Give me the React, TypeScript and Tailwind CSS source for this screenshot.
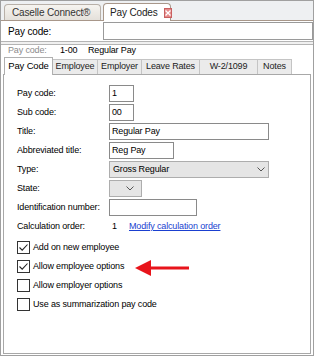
import React from "react";

const font = { fontFamily: "'Liberation Sans', Arial, sans-serif" };

function Check({ checked }: { checked?: boolean }) {
  return (
    <div className="w-[13px] h-[13px] border border-[#333] bg-white flex items-center justify-center shrink-0">
      {checked && (
        <svg width="11" height="11" viewBox="0 0 11 11">
          <path d="M1.5 5.5 L4.2 8.2 L9.5 2.5" fill="none" stroke="#222" strokeWidth="1.1" />
        </svg>
      )}
    </div>
  );
}

function Row({ label, children }: { label: string; children?: React.ReactNode }) {
  return (
    <div className="flex items-center h-[17px]">
      <div className="w-[92px] shrink-0">{label}</div>
      {children}
    </div>
  );
}

const inputCls = "h-[17px] border border-[#8a8a8a] bg-white flex items-center px-[2px]";

const Chevron = () => (
  <svg width="8" height="5" viewBox="0 0 8 5">
    <path d="M0.5 0.5 L4 4 L7.5 0.5" fill="none" stroke="#555" strokeWidth="1" />
  </svg>
);

export default function App() {
  return (
    <div
      className="w-[314px] h-[356px] bg-white border border-[#a0a0a0] flex flex-col text-[9px] tracking-[-0.15px] text-black overflow-hidden relative whitespace-nowrap"
      style={font}
    >
      {/* top tab strip */}
      <div className="h-[20px] bg-[#eef0f2] border-b border-[#a8978a] flex items-end pl-[3px] gap-[2px] shrink-0">
        <div className="h-[16px] w-[97px] border border-b-0 border-[#b8b0a8] rounded-t-[4px] bg-gradient-to-b from-[#f6f4f0] to-[#e4e0da] flex items-center pl-[7px] text-[#333] text-[10px]">
          Caselle Connect®
        </div>
        <div className="h-[18px] w-[68px] border border-b-0 border-[#a8978a] rounded-t-[4px] bg-white flex items-center pl-[6px] gap-[6px] mb-[-1px] text-[#222] text-[10px]">
          <span>Pay Codes</span>
          <div className="w-[10px] h-[10px] bg-[#e58a8a] border border-[#c86060] flex items-center justify-center">
            <svg width="6" height="6" viewBox="0 0 6 6">
              <path d="M0.5 0.5 L5.5 5.5 M5.5 0.5 L0.5 5.5" stroke="white" strokeWidth="1.3" />
            </svg>
          </div>
        </div>
      </div>

      {/* Pay code lookup row */}
      <div className="h-[20px] flex items-center pl-[7px] shrink-0">
        <div className="w-[95px] text-[10px]">Pay code:</div>
        <div className="flex-1 h-[18px] border border-[#9a9a9a] bg-white" />
      </div>
      <div className="h-[4px] border-t border-b border-[#b4b4b4] bg-[#f0f0f0] shrink-0" />

      {/* subheader */}
      <div className="h-[12px] flex items-center pl-[7px] shrink-0">
        <span className="text-[#8c8c8c] w-[52px]">Pay code:</span>
        <span className="w-[28px]">1-00</span>
        <span>Regular Pay</span>
      </div>

      {/* inner tabs */}
      <div className="h-[17px] flex items-end pl-[3px] shrink-0 relative z-10">
        <div className="h-[18px] w-[49px] border border-b-0 border-[#b0b0b0] bg-white flex items-center justify-center mb-[-1px] text-[9.5px]">
          Pay Code
        </div>
        {[
          ["Employee", "w-[45px]"],
          ["Employer", "w-[44px]"],
          ["Leave Rates", "w-[58px]"],
          ["W-2/1099", "w-[58px]"],
          ["Notes", "w-[34px]"],
        ].map(([t, w]) => (
          <div
            key={t}
            className={`h-[15px] ${w} border border-l-0 border-b-0 border-[#c4c4c4] bg-[#ebebeb] flex items-center justify-center text-[#222]`}
          >
            {t}
          </div>
        ))}
      </div>

      {/* panel */}
      <div className="flex-1 mx-[2px] mb-[1px] border border-[#a8a8a8] bg-white pl-[13px] pt-[10px] flex flex-col gap-[2px]">
        <Row label="Pay code:">
          <div className={`${inputCls} w-[25px]`}>1</div>
        </Row>
        <Row label="Sub code:">
          <div className={`${inputCls} w-[25px]`}>00</div>
        </Row>
        <Row label="Title:">
          <div className={`${inputCls} w-[160px]`}>Regular Pay</div>
        </Row>
        <Row label="Abbreviated title:">
          <div className={`${inputCls} w-[65px]`}>Reg Pay</div>
        </Row>
        <Row label="Type:">
          <div className="h-[17px] w-[160px] border border-[#adadad] bg-[#e5e5e5] flex items-center justify-between px-[3px]">
            <span>Gross Regular</span>
            <Chevron />
          </div>
        </Row>
        <Row label="State:">
          <div className="h-[17px] w-[33px] border border-[#adadad] bg-[#e5e5e5] flex items-center justify-end pr-[7px]">
            <Chevron />
          </div>
        </Row>
        <Row label="Identification number:">
          <div className={`${inputCls} w-[88px]`} />
        </Row>
        <div className="flex items-center h-[18px]">
          <div className="w-[92px] shrink-0">Calculation order:</div>
          <span className="w-[20px] pl-[3px]">1</span>
          <span className="text-[#1a3fd0] underline">Modify calculation order</span>
        </div>
        <div className="flex flex-col">
          {[
            ["Add on new employee", true],
            ["Allow employee options", true],
            ["Allow employer options", false],
            ["Use as summarization pay code", false],
          ].map(([t, c]) => (
            <div key={t as string} className="h-[19px] flex items-center gap-[3px]">
              <Check checked={c as boolean} />
              <span>{t as string}</span>
            </div>
          ))}
        </div>
      </div>

      {/* red arrow annotation */}
      <svg className="absolute left-[134px] top-[258px]" width="56" height="18" viewBox="0 0 56 18">
        <path d="M14 9 L54 9" stroke="#e8141b" strokeWidth="3" />
        <path d="M0 9 L16 1 L16 17 Z" fill="#e8141b" />
      </svg>
    </div>
  );
}
